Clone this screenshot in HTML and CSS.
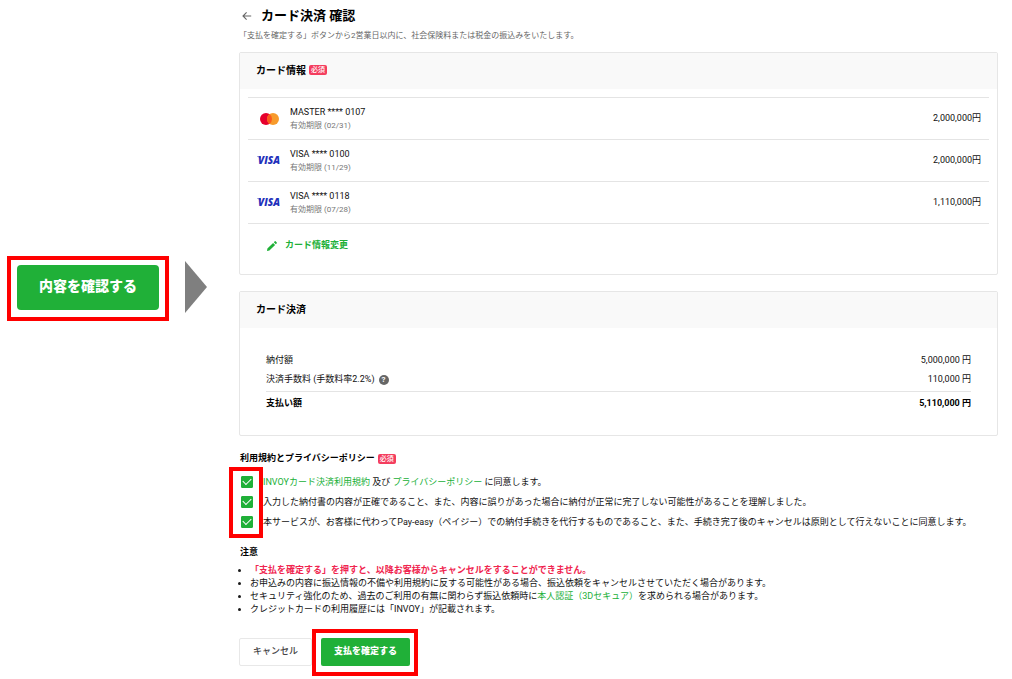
FILE: index.html
```html
<!DOCTYPE html>
<html lang="ja">
<head>
<meta charset="utf-8">
<meta name="viewport" content="width=device-width, initial-scale=1">
<title>カード決済 確認</title>
<link rel="stylesheet" href="styles.css">
</head>
<body>
<div class="page">
  <aside class="step">
    <div class="step-frame"><button class="btn btn-large" type="button">内容を確認する</button></div>
    <svg class="step-arrow" viewBox="0 0 22 52" aria-hidden="true"><path d="M0 0L22 26L0 52Z" fill="#7f7f7f"/></svg>
  </aside>

  <main class="content">
    <header class="title-row">
      <a class="back" href="#" aria-label="戻る">
        <svg viewBox="0 0 10 10"><path d="M9.2 5H1.2M4.6 1.4L1 5L4.6 8.6" fill="none" stroke="#666" stroke-width="1.1"/></svg>
      </a>
      <h1>カード決済 確認</h1>
    </header>
    <p class="lead">「支払を確定する」ボタンから2営業日以内に、社会保険料または税金の振込みをいたします。</p>

    <section class="card">
      <h2 class="card-head">カード情報<span class="tag">必須</span></h2>
      <ul class="cards">
        <li>
          <svg class="brand" viewBox="0 0 26 14" aria-label="Mastercard"><circle cx="9" cy="7" r="6" fill="#e6002d"/><circle cx="16" cy="7" r="6" fill="#f79b2c"/><path d="M12.5 2.1A6 6 0 0 1 12.5 11.9A6 6 0 0 1 12.5 2.1Z" fill="#fb5a1e"/></svg>
          <div class="card-name">MASTER **** 0107<small>有効期限 (02/31)</small></div>
          <span>2,000,000円</span>
        </li>
        <li>
          <svg class="brand" viewBox="0 0 26 14" aria-label="Visa"><path d="M0 2.4H4L3.4 4.4Q2 3 0 2.7Z" fill="#1f31bb"/><text class="visa" x="1" y="10">VISA</text></svg>
          <div class="card-name">VISA **** 0100<small>有効期限 (11/29)</small></div>
          <span>2,000,000円</span>
        </li>
        <li>
          <svg class="brand" viewBox="0 0 26 14" aria-label="Visa"><path d="M0 2.4H4L3.4 4.4Q2 3 0 2.7Z" fill="#1f31bb"/><text class="visa" x="1" y="10">VISA</text></svg>
          <div class="card-name">VISA **** 0118<small>有効期限 (07/28)</small></div>
          <span>1,110,000円</span>
        </li>
      </ul>
      <button class="edit" type="button">
        <svg viewBox="0 0 10 10" aria-hidden="true"><path d="M0 10L.4 7.6L6.1 1.9L8.1 3.9L2.4 9.6ZM6.8 1.2L7.8.2Q8.2-.1 8.6.2L9.8 1.4Q10.1 1.8 9.8 2.2L8.8 3.2Z" fill="#20b038"/></svg>カード情報変更
      </button>
    </section>

    <section class="card">
      <h2 class="card-head">カード決済</h2>
      <dl class="summary">
        <div><dt>納付額</dt><dd>5,000,000 円</dd></div>
        <div><dt>決済手数料 (手数料率2.2%)<button class="help" type="button" aria-label="ヘルプ">?</button></dt><dd>110,000 円</dd></div>
        <div class="total"><dt>支払い額</dt><dd>5,110,000 円</dd></div>
      </dl>
    </section>

    <h3>利用規約とプライバシーポリシー<span class="tag">必須</span></h3>
    <div class="terms">
      <div class="term"><input type="checkbox" id="t1" checked><label for="t1"><a href="#">INVOYカード決済利用規約</a> 及び <a href="#">プライバシーポリシー</a> に同意します。</label></div>
      <div class="term"><input type="checkbox" id="t2" checked><label for="t2">入力した納付書の内容が正確であること、また、内容に誤りがあった場合に納付が正常に完了しない可能性があることを理解しました。</label></div>
      <div class="term"><input type="checkbox" id="t3" checked><label for="t3">本サービスが、お客様に代わってPay-easy（ペイジー）での納付手続きを代行するものであること、また、手続き完了後のキャンセルは原則として行えないことに同意します。</label></div>
    </div>

    <h3>注意</h3>
    <ul class="notes">
      <li class="warn">「支払を確定する」を押すと、以降お客様からキャンセルをすることができません。</li>
      <li>お申込みの内容に振込情報の不備や利用規約に反する可能性がある場合、振込依頼をキャンセルさせていただく場合があります。</li>
      <li>セキュリティ強化のため、過去のご利用の有無に関わらず振込依頼時に<a href="#">本人認証（3Dセキュア）</a>を求められる場合があります。</li>
      <li>クレジットカードの利用履歴には「INVOY」が記載されます。</li>
    </ul>

    <div class="actions">
      <button class="btn btn-cancel" type="button">キャンセル</button>
      <div class="confirm"><button class="btn" type="button">支払を確定する</button></div>
    </div>
  </main>
</div>
</body>
</html>
```
FILE: styles.css
```css
*, *::before { box-sizing: border-box; }

body {
  margin: 0;
  background: #fff;
  color: #111;
  font: 9px/13px Roboto, "Noto Sans CJK JP", sans-serif;
}

h1, h2, h3, p, ul, dl, dd { margin: 0; padding: 0; }
ul { list-style: none; }
a { color: #20b038; text-decoration: none; }
button { font: inherit; cursor: pointer; }
svg { flex: none; }

.page {
  display: flex;
  align-items: flex-start;
  padding: 6px 14px 12px 7px;
}

/* Previous step */
.step {
  flex: none;
  display: flex;
  align-items: flex-start;
  gap: 16px;
  margin: 250px 32px 0 0;
}
.step-frame {
  padding: 5px 6px 7px;
  border: 4px solid #f00;
}
.step-arrow { width: 22px; height: 52px; margin-top: 5px; }

/* Buttons */
.btn {
  display: block;
  height: 28px;
  padding: 0 13px 1px;
  border: 0;
  border-radius: 2px;
  background: #20b038;
  color: #fff;
  font-weight: 900;
}
.btn-large {
  width: 142px;
  height: 45px;
  padding: 0 0 3px;
  border-radius: 4px;
  font-size: 14px;
}
.btn-cancel {
  border: 1px solid #e8e8e8;
  background: #fff;
  color: #444;
  font-weight: 500;
}

.content { flex: 1; min-width: 0; }

.title-row {
  display: flex;
  align-items: center;
  gap: 9px;
  padding-left: 3px;
}
.back, .back svg { display: block; width: 10px; height: 10px; }
h1 {
  color: #000;
  font-size: 13px;
  line-height: 20px;
}
.lead {
  margin: 4px 0 10px;
  color: #666;
  font-size: 8px;
  line-height: 12px;
}

/* Panels */
.card {
  margin-bottom: 16px;
  border: 1px solid #e6e6e6;
  border-radius: 2px;
}
.card-head {
  display: flex;
  align-items: center;
  height: 36px;
  padding: 0 16px 2px;
  background: #f9f9f9;
  color: #000;
  font-size: 10px;
}
.tag {
  margin-left: 3px;
  padding: 0 2px;
  border-radius: 2px;
  background: #f43d5e;
  color: #fff;
  font-size: 7px;
  font-weight: 500;
  line-height: 10px;
}

.cards {
  margin: 8px 8px 0;
  border-top: 1px solid #e4e4e4;
}
.cards li {
  display: flex;
  align-items: center;
  height: 42px;
  padding: 0 8px 0 9px;
  border-bottom: 1px solid #e4e4e4;
}
.brand { width: 26px; height: 14px; }
.visa {
  fill: #1f31bb;
  font: italic 800 10px "Open Sans", sans-serif;
}
.card-name { flex: 1; margin-left: 7px; }
.card-name small {
  display: block;
  color: #777;
  font-size: 8px;
}
.edit {
  display: flex;
  align-items: center;
  gap: 8px;
  margin: 15px 27px 22px;
  padding: 0;
  border: 0;
  background: none;
  color: #20b038;
  font-weight: 700;
}
.edit svg { width: 10px; height: 10px; }

.summary { padding: 23px 26px 22px; }
.summary div {
  display: flex;
  justify-content: space-between;
  line-height: 19px;
}
.summary dt { display: flex; align-items: center; gap: 4px; }
.summary .total {
  margin-top: 2px;
  padding-top: 2px;
  border-top: 1px solid #e4e4e4;
  color: #000;
  font-weight: 700;
}
.help {
  width: 10px;
  height: 10px;
  padding: 0;
  border: 0;
  border-radius: 50%;
  background: #666;
  color: #fff;
  font-size: 8px;
  font-weight: 700;
  line-height: 10px;
}

h3 {
  display: flex;
  align-items: center;
  padding-left: 1px;
  color: #000;
  font-size: 9px;
}

/* Agreement */
.terms { position: relative; margin: 7px 0 14px; }
.terms::before {
  content: "";
  position: absolute;
  z-index: 1;
  inset: -5px auto -6px -10px;
  width: 34px;
  border: 4px solid #f00;
  pointer-events: none;
}
.term {
  display: flex;
  align-items: center;
  gap: 10px;
  height: 20px;
}
.term input {
  flex: none;
  display: grid;
  place-items: center;
  appearance: none;
  width: 12px;
  height: 12px;
  margin: 0 0 0 2px;
  border: 1px solid #20b038;
  border-radius: 1px;
}
.term input:checked { background: #20b038; }
.term input:checked::before {
  content: "";
  width: 8px;
  height: 5px;
  margin-bottom: 3px;
  border: solid #fff;
  border-width: 0 0 1px 1px;
  transform: rotate(-45deg);
}

.notes { margin-top: 5px; }
.notes li {
  display: flex;
  align-items: center;
}
.notes li::before {
  content: "";
  flex: none;
  width: 3px;
  height: 3px;
  margin: 0 9px 0 -1px;
  border-radius: 50%;
  background: #1a1a1a;
}
.warn { color: #f0254f; font-weight: 700; }

.actions { display: flex; gap: 9px; margin-top: 22px; }
.confirm { position: relative; }
.confirm::before {
  content: "";
  position: absolute;
  inset: -9px -8px -10px -9px;
  border: 4px solid #f00;
  pointer-events: none;
}
```
